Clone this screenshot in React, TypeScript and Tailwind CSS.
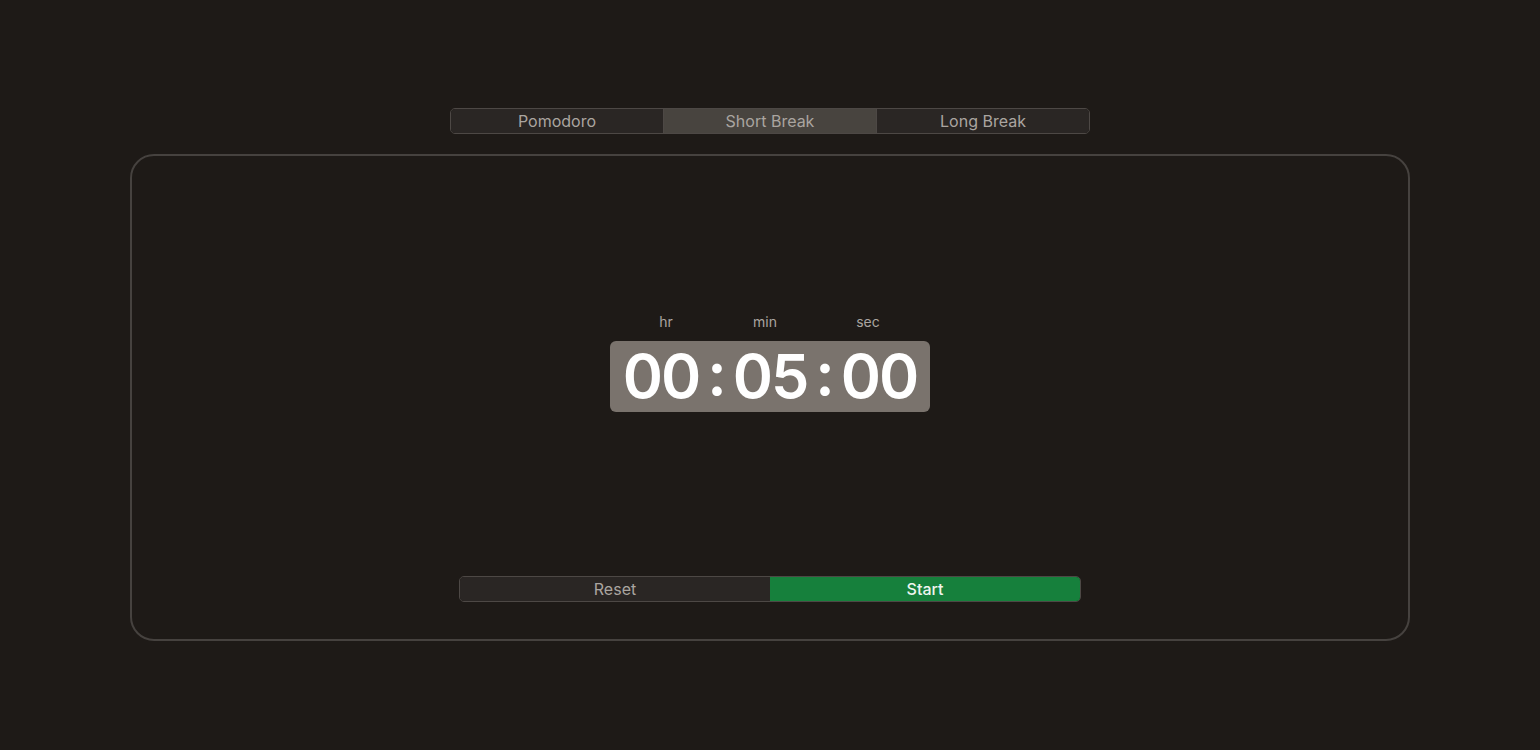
import { useState } from 'react';

const modes = ['Pomodoro', 'Short Break', 'Long Break'];

export default function App() {
    const [mode, setMode] = useState('Short Break');

    return (
        <div className="min-h-screen w-full bg-[#1e1a17] flex flex-col items-center pt-[108px] font-['Inter',sans-serif]">
            {/* Mode tabs */}
            <div className="flex w-[640px] h-[26px] rounded-[5px] border border-[#4d4845] overflow-hidden">
                {modes.map((m, i) => (
                    <button
                        key={m}
                        onClick={() => setMode(m)}
                        className={`flex-1 flex items-center justify-center text-[16px] leading-none text-[#aaa5a0] ${i > 0 ? 'border-l border-[#4d4845]' : ''} ${mode === m ? 'bg-[#48443f]' : 'bg-[#2a2624]'}`}
                    >
                        {m}
                    </button>
                ))}
            </div>

            {/* Timer card */}
            <div className="mt-[20px] w-[1280px] h-[487px] rounded-[24px] border-2 border-[#46423f] flex flex-col items-center pb-[37px]">
                <div className="flex-1 flex flex-col items-center justify-center pb-[6px]">
                    <div className="flex w-[320px] text-[14px] text-[#aaa5a0] leading-none mb-[12px]">
                        <span className="w-[112px] text-center">hr</span>
                        <span className="w-[96px] text-center pr-[10px]">min</span>
                        <span className="w-[112px] text-center pr-[12px]">sec</span>
                    </div>
                    <div className="w-[320px] h-[71px] rounded-[6px] bg-[#7a736d] flex items-center justify-center text-white text-[61px] font-semibold leading-none tracking-[-2px]">
                        <span>00</span>
                        <span className="mx-[8px] -translate-y-[3px]">:</span>
                        <span>05</span>
                        <span className="mx-[8px] -translate-y-[3px]">:</span>
                        <span>00</span>
                    </div>
                </div>

                {/* Controls */}
                <div className="flex w-[622px] h-[26px] rounded-[5px] border border-[#4d4845] overflow-hidden">
                    <button className="flex-1 flex items-center justify-center bg-[#2a2624] text-[16px] leading-none text-[#aaa5a0]">
                        Reset
                    </button>
                    <button className="flex-1 flex items-center justify-center bg-[#16803c] text-[16px] font-medium leading-none text-[#eef5ef]">
                        Start
                    </button>
                </div>
            </div>
        </div>
    );
}
